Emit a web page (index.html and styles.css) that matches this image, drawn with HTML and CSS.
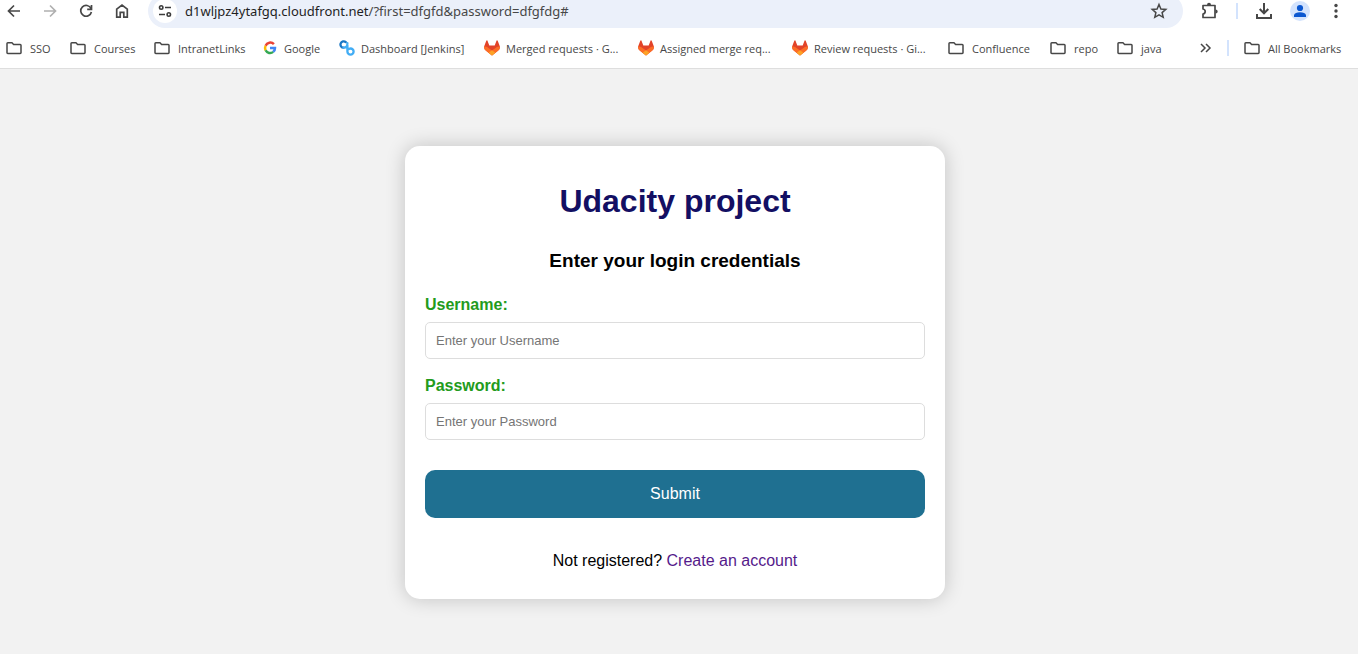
FILE: index.html
```html
<!DOCTYPE html>
<html lang="en">
<head>
<meta charset="utf-8">
<title>Udacity project</title>
<link rel="stylesheet" href="styles.css">
</head>
<body>
<svg class="defs" width="0" height="0" aria-hidden="true">
  <symbol id="folder" viewBox="0 0 16 16"><path d="M1.800 2.800H6L7.600 4.500H14.200Q15 4.500 15 5.300V12.700Q15 13.400 14.200 13.400H1.800Q1 13.400 1 12.700V3.600Q1 2.800 1.800 2.800Z" fill="none" stroke="#474747" stroke-width="1.500" stroke-linejoin="round"/></symbol>
  <symbol id="gitlab" viewBox="0 0 16 16"><path d="M3.400 .5L5.300 5.400H10.700L12.600 .5Q13.200 0 13.700 .8L15.800 6.200Q16.400 9 14 10.800L8 15.500L2 10.800Q-.4 9 .2 6.200L2.300 .8Q2.800 0 3.400 .5Z" fill="#e24329"/><path d="M.2 6.200Q3.500 6.600 5.200 8.400L8 10.500L10.800 8.400Q12.500 6.600 15.800 6.200Q16.400 9 14 10.800L8 15.500L2 10.800Q-.4 9 .2 6.200Z" fill="#fc6d26"/><path d="M4.600 12.800L8 10.200L11.400 12.800L8 15.500Z" fill="#fca326"/></symbol>
</svg>
<header class="browser">
  <div class="toolbar">
    <nav class="nav">
      <button class="icon" aria-label="Back"><svg width="16" height="16" viewBox="0 0 16 16" fill="none" stroke="#474747" stroke-width="1.700"><path d="M14 8H3M8 2.500L2.500 8L8 13.500"/></svg></button>
      <button class="icon" aria-label="Forward"><svg width="16" height="16" viewBox="0 0 16 16" fill="none" stroke="#b0b0b0" stroke-width="1.700"><path d="M2 8H13M8 2.500L13.500 8L8 13.500"/></svg></button>
      <button class="icon" aria-label="Reload"><svg width="16" height="16" viewBox="0 0 16 16" fill="none" stroke="#474747" stroke-width="1.700"><path d="M13 5.500A5.400 5.400 0 1 0 13.400 9M13.500 2V6.300H9.200"/></svg></button>
      <button class="icon" aria-label="Home"><svg width="16" height="16" viewBox="0 0 16 16" fill="none" stroke="#474747" stroke-width="1.700"><path d="M2.700 6.200L8 2L13.300 6.200V14.200H9.800V9.300H6.200V14.200H2.700Z"/></svg></button>
    </nav>
    <div class="address">
      <button class="site" aria-label="Site information"><svg width="16" height="16" viewBox="0 0 16 16" fill="none" stroke="#3c3c3c" stroke-width="1.600"><circle cx="4.200" cy="4.500" r="1.700"/><path d="M8 4.500H14M2 11.500H8"/><circle cx="11.800" cy="11.500" r="1.700"/></svg></button>
      <div class="url"><span class="host">d1wljpz4ytafgq.cloudfront.net</span>/?first=dfgfd&amp;password=dfgfdg#</div>
      <button class="icon" aria-label="Bookmark this page"><svg width="18" height="18" viewBox="0 0 18 18" fill="none" stroke="#474747" stroke-width="1.500"><path d="M9 2.500L10.900 7L15.800 7.400L12.100 10.600L13.200 15.300L9 12.800L4.800 15.300L5.900 10.600L2.200 7.400L7.100 7Z"/></svg></button>
    </div>
    <div class="actions">
      <button class="icon" aria-label="Extensions"><svg width="18" height="18" viewBox="0 0 18 18" fill="none" stroke="#474747" stroke-width="1.700"><path d="M2 3.500H14V15.500H2V12Q4.200 11.500 4.200 9.500Q4.200 7.500 2 7Z" stroke-linejoin="round"/><path d="M6 3Q6 .8 8 .8Q10 .8 10 3ZM14.500 7.500Q16.700 7.500 16.700 9.500Q16.700 11.500 14.500 11.500Z" fill="#474747" stroke="none"/></svg></button>
      <span class="divider"></span>
      <button class="icon" aria-label="Downloads"><svg width="18" height="18" viewBox="0 0 18 18" fill="none" stroke="#474747" stroke-width="2"><path d="M9 1V11M4.700 7L9 11.300L13.300 7M2 12V16H16V12"/></svg></button>
      <button class="profile" aria-label="Profile"><svg width="20" height="20" viewBox="0 0 20 20"><circle cx="10" cy="10" r="10" fill="#d3e3fd"/><circle cx="10" cy="7" r="3.100" fill="#0b57d0"/><path d="M4 16V14Q5 11.200 10 11.200Q15 11.200 16 14V16Z" fill="#0b57d0"/></svg></button>
      <button class="icon" aria-label="Menu"><svg width="18" height="18" viewBox="0 0 18 18" fill="#474747"><circle cx="9" cy="3.500" r="1.700"/><circle cx="9" cy="9" r="1.700"/><circle cx="9" cy="14.500" r="1.700"/></svg></button>
    </div>
  </div>
  <nav class="bookmarks">
    <a href="#"><svg><use href="#folder"/></svg>SSO</a>
    <a href="#"><svg><use href="#folder"/></svg>Courses</a>
    <a href="#"><svg><use href="#folder"/></svg>IntranetLinks</a>
    <a class="site-link" href="#"><svg viewBox="0 0 16 16" fill="none" stroke-width="2.500"><path d="M11.900 4.200A5 5 0 0 0 3.600 5.700" stroke="#ea4335"/><path d="M3.600 5.700A5 5 0 0 0 3.600 10.300" stroke="#fbbc05"/><path d="M3.600 10.300A5 5 0 0 0 11.200 11.900" stroke="#34a853"/><path d="M11.200 11.900A5 5 0 0 0 13 8H8" stroke="#4285f4"/></svg>Google</a>
    <a class="site-link" href="#"><svg viewBox="0 0 16 16" fill="none" stroke-width="2.300" stroke-linecap="round"><path d="M6.800 2.100A3.200 3.200 0 1 0 4.600 7.700" stroke="#1976c5"/><path d="M4.600 7.700C7.500 7.500 8.400 6.500 8.400 3.200M8.400 5V11.600A3.100 3.100 0 1 0 11.500 8.500Q10 8.500 8.400 10" stroke="#42adf5"/></svg>Dashboard [Jenkins]</a>
    <a class="site-link" href="#"><svg><use href="#gitlab"/></svg>Merged requests · G...</a>
    <a class="site-link" href="#"><svg><use href="#gitlab"/></svg>Assigned merge req...</a>
    <a class="site-link" href="#"><svg><use href="#gitlab"/></svg>Review requests · Gi...</a>
    <a href="#"><svg><use href="#folder"/></svg>Confluence</a>
    <a href="#"><svg><use href="#folder"/></svg>repo</a>
    <a href="#"><svg><use href="#folder"/></svg>java</a>
    <button class="more" aria-label="More bookmarks"><svg viewBox="0 0 16 16" fill="none" stroke="#474747" stroke-width="1.500"><path d="M3 4L7 8L3 12M8 4L12 8L8 12"/></svg></button>
    <span class="divider"></span>
    <a href="#"><svg><use href="#folder"/></svg>All Bookmarks</a>
  </nav>
</header>
<main class="page">
  <form class="card">
    <h1>Udacity project</h1>
    <h2>Enter your login credentials</h2>
    <label for="first">Username:</label>
    <input type="text" id="first" name="first" placeholder="Enter your Username">
    <label for="password">Password:</label>
    <input type="password" id="password" name="password" placeholder="Enter your Password">
    <button class="submit" type="button">Submit</button>
    <p>Not registered? <a href="#">Create an account</a></p>
  </form>
</main>
</body>
</html>
```
FILE: styles.css
```css
* { box-sizing: border-box; }
body {
  margin: 0;
  min-height: 100vh;
  display: flex;
  flex-direction: column;
  background: #f2f2f2;
  font-family: "Liberation Sans", Arial, sans-serif;
}
.defs { position: absolute; }
button { border: 0; padding: 0; background: none; font: inherit; }
svg { display: block; flex: none; }

.browser {
  background: #fff;
  border-bottom: 1px solid #dedede;
  overflow: hidden;
  color: #474747;
  font-family: "Noto Sans", "Open Sans", sans-serif;
}
.toolbar {
  display: flex;
  align-items: center;
  height: 34px;
  margin-top: -6px;
  padding: 0 13px 0 6px;
}
.nav { display: flex; gap: 20px; margin-right: 18px; }
.address {
  flex: 1;
  display: flex;
  align-items: center;
  height: 34px;
  padding: 0 15px 0 5px;
  border-radius: 17px;
  background: #ebf0fa;
}
.site {
  display: grid;
  place-items: center;
  width: 24px;
  height: 24px;
  border-radius: 50%;
  background: #fff;
}
.url { flex: 1; margin-left: 8px; font-size: 13px; white-space: nowrap; }
.host { color: #1f1f1f; }
.actions { display: flex; align-items: center; gap: 17px; margin-left: 18px; }
.divider { width: 2px; height: 16px; background: #d3e3fd; }

.bookmarks {
  display: grid;
  grid-template-columns: 64px 84px 108px 77px 145px 154px 154px 156px 102px 67px 1fr 29px 17px 100px;
  align-items: center;
  height: 40px;
  padding: 0 14px 0 6px;
  font-family: "Open Sans", "Noto Sans", sans-serif;
  font-size: 11px;
}
.bookmarks a {
  display: flex;
  align-items: center;
  gap: 8px;
  color: #474747;
  text-decoration: none;
  white-space: nowrap;
}
.bookmarks .site-link { gap: 6px; }
.bookmarks svg { width: 16px; height: 16px; }

.page {
  flex: 1;
  display: flex;
  justify-content: center;
  align-items: flex-start;
  padding: 77px 8px 24px 0;
}
.card {
  display: flex;
  flex-direction: column;
  width: 100%;
  max-width: 540px;
  padding: 20px;
  border-radius: 15px;
  background: #fff;
  box-shadow: 0 0 20px rgba(0, 0, 0, 0.2);
  text-align: center;
}
h1 { margin: 17px 0 0; font-size: 32px; line-height: 37px; color: #130f63; }
h2 { margin: 30px 0 23px; font-size: 19px; line-height: 22px; color: #000; }
label {
  margin-bottom: 8px;
  font-size: 16px;
  line-height: 19px;
  font-weight: bold;
  text-align: left;
  color: #239b1c;
}
input {
  width: 100%;
  height: 37px;
  margin-bottom: 17px;
  padding: 10px;
  border: 1px solid #ddd;
  border-radius: 5px;
  font: 13px "Liberation Sans", Arial, sans-serif;
}
input::placeholder { color: #757575; }
.submit {
  height: 48px;
  margin-top: 13px;
  border-radius: 10px;
  background: #1f7091;
  color: #fff;
  font-size: 16px;
}
.card p { margin: 33px 0 9px; font-size: 16px; line-height: 19px; }
.card p a { color: #551a8b; text-decoration: none; }
```
